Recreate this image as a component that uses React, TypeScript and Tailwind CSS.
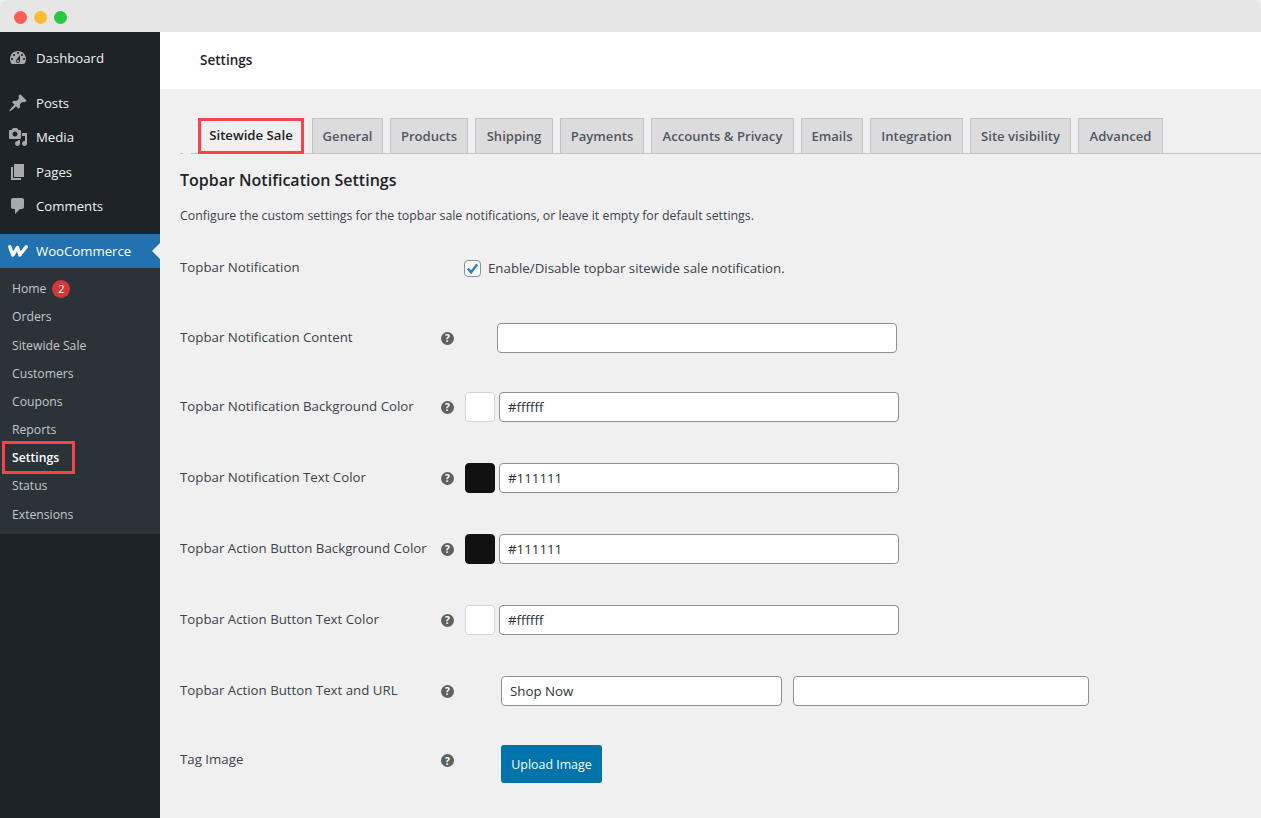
import type { ReactNode } from 'react';

const font = { sans: "font-['Open_Sans',sans-serif]" };

// wp admin menu glyphs
const icons = {
  dashboard:
    'M3.76 16h12.48c1.1-1.37 1.76-3.11 1.76-5 0-4.42-3.58-8-8-8s-8 3.58-8 8c0 1.89.66 3.63 1.76 5zM10 4c.55 0 1 .45 1 1s-.45 1-1 1-1-.45-1-1 .45-1 1-1zM6 6c.55 0 1 .45 1 1s-.45 1-1 1-1-.45-1-1 .45-1 1-1zm8 0c.55 0 1 .45 1 1s-.45 1-1 1-1-.45-1-1 .45-1 1-1zm-5.37 5.55L12 7v6c0 1.1-.9 2-2 2s-2-.9-2-2c0-.57.24-1.08.63-1.45zM4 10c.55 0 1 .45 1 1s-.45 1-1 1-1-.45-1-1 .45-1 1-1zm12 0c.55 0 1 .45 1 1s-.45 1-1 1-1-.45-1-1 .45-1 1-1zm-5 3c0-.55-.45-1-1-1s-1 .45-1 1 .45 1 1 1 1-.45 1-1z',
  posts:
    'M10.44 3.02l1.82-1.82 6.36 6.35-1.83 1.82c-1.05-.68-2.48-.57-3.41.36l-.75.75c-.92.93-1.04 2.35-.35 3.41l-1.83 1.82-2.41-2.41-2.8 2.79c-.42.42-3.38 2.71-3.8 2.29s1.86-3.39 2.28-3.81l2.79-2.79L4.1 9.36l1.83-1.82c1.05.69 2.48.57 3.4-.36l.75-.75c.93-.92 1.05-2.35.36-3.41z',
  media:
    'M13 11V4c0-.55-.45-1-1-1h-1.67L9 1H5L3.67 3H2c-.55 0-1 .45-1 1v7c0 .55.45 1 1 1h10c.55 0 1-.45 1-1zM7 4.5c1.38 0 2.5 1.12 2.5 2.5S8.38 9.5 7 9.5 4.5 8.38 4.5 7 5.62 4.5 7 4.5zM14 6h5v10.5c0 1.38-1.12 2.5-2.5 2.5S14 17.88 14 16.5s1.12-2.5 2.5-2.5c.17 0 .34.02.5.05V9h-3V6zm-4 8.05V13h2v3.5c0 1.38-1.12 2.5-2.5 2.5S7 17.88 7 16.5 8.12 14 9.5 14c.17 0 .34.02.5.05z',
  pages: 'M6 15V2h10v13H6zm-1 1h8v2H3V5h2v11z',
  comments: 'M5 2h9c1.1 0 2 .9 2 2v7c0 1.1-.9 2-2 2h-2l-5 5v-5H5c-1.1 0-2-.9-2-2V4c0-1.1.9-2 2-2z',
};

const MenuIcon = ({ d }: { d: string }) => (
  <svg viewBox="0 0 20 20" className="w-5 h-5 ml-2 shrink-0 fill-[#a7aaad]">
    <path d={d} />
  </svg>
);

const MenuItem = ({ icon, label }: { icon: string; label: string }) => (
  <div className="flex items-center h-[34.4px] text-[#f0f0f1]">
    <MenuIcon d={icon} />
    <span className="ml-[8px] pt-[2px]">{label}</span>
  </div>
);

const submenu = ['Orders', 'Sitewide Sale', 'Customers', 'Coupons', 'Reports'];

const Sidebar = () => (
  <aside className="w-40 shrink-0 bg-[#1d2327] text-[13.2px] pt-[9px]">
    <MenuItem icon={icons.dashboard} label="Dashboard" />
    <div className="h-[10.4px]" />
    <MenuItem icon={icons.posts} label="Posts" />
    <MenuItem icon={icons.media} label="Media" />
    <MenuItem icon={icons.pages} label="Pages" />
    <MenuItem icon={icons.comments} label="Comments" />
    <div className="h-[10.4px]" />
    <div className="relative flex items-center h-[34px] bg-[#2271b1] text-white">
      <svg viewBox="0 0 20 12" className="w-[20px] h-[12px] ml-[8px] shrink-0">
        <path d="M1.8 1.8 L4.8 10 L9.5 2.5 L11.8 10 L18.2 1.8" fill="none" stroke="#fff" strokeWidth="3.4" strokeLinejoin="round" strokeLinecap="round" />
      </svg>
      <span className="ml-[8px] pt-[2px]">WooCommerce</span>
      <div className="absolute right-0 top-[9px] w-0 h-0 border-y-[8px] border-y-transparent border-r-[8px] border-r-[#f0f0f1]" />
    </div>
    <div className="bg-[#2c3338] pt-[7.5px] pb-[4.7px] text-[12.2px] text-[#c3c8cc]">
      <div className="flex items-center h-[28.2px] pl-3">
        Home
        <span className="ml-[6px] w-[18px] h-[18px] rounded-full bg-[#d63638] text-white text-[11px] flex items-center justify-center">2</span>
      </div>
      {submenu.map((item) => (
        <div key={item} className="flex items-center h-[28.2px] pl-3">{item}</div>
      ))}
      <div className="relative flex items-center h-[28.2px] pl-3 font-semibold text-white">
        Settings
        <div className="absolute left-[2px] top-[-3px] w-[73px] h-[33px] border-[3px] border-[#f9434c]" />
      </div>
      <div className="flex items-center h-[28.2px] pl-3">Status</div>
      <div className="flex items-center h-[28.2px] pl-3">Extensions</div>
    </div>
  </aside>
);

const tabs = [
  { label: 'General', w: 'w-[71px]' },
  { label: 'Products', w: 'w-[78px]' },
  { label: 'Shipping', w: 'w-[78px]' },
  { label: 'Payments', w: 'w-[84px]' },
  { label: 'Accounts & Privacy', w: 'w-[143px]' },
  { label: 'Emails', w: 'w-[62px]' },
  { label: 'Integration', w: 'w-[93px]' },
  { label: 'Site visibility', w: 'w-[101px]' },
  { label: 'Advanced', w: 'w-[85px]' },
];

const Tabs = () => (
  <div className="flex items-end gap-[7px] h-[35px] mt-[30px] border-b border-[#c3c4c7] pl-[18px] relative">
    <div className="absolute left-[3px] bottom-[-1px] w-[8px] h-px bg-[#f0f0f0]" />
    <div className="flex items-center justify-center w-[106px] h-[36px] -mb-px border-[3px] border-[#f9434c] mr-px text-[13.2px] font-semibold text-[#1d2327] bg-[#f0f0f0]">
      Sitewide Sale
    </div>
    {tabs.map((t) => (
      <div key={t.label} className={`flex items-center justify-center h-[35px] pt-[2px] ${t.w} bg-[#dcdcde] border border-b-0 border-[#c3c4c7] text-[13.1px] font-semibold text-[#50575e]`}>
        {t.label}
      </div>
    ))}
  </div>
);

const Help = () => (
  <span className="w-[13px] h-[13px] shrink-0 rounded-full bg-[#5f6060] text-white text-[10px] font-bold flex items-center justify-center leading-none">?</span>
);

const Field = ({ value, className }: { value?: string; className: string }) => (
  <div className={`flex items-center h-[30px] pt-[2px] bg-white border border-[#8c8f94] rounded-[4px] px-2 text-[13.3px] text-[#2c3338] ${className}`}>
    {value}
  </div>
);

const Row = ({ label, help = true, className, children }: { label: string; help?: boolean; className?: string; children: ReactNode }) => (
  <div className={`flex items-center h-10 ${className ?? ''}`}>
    <span className="w-[261px] shrink-0">{label}</span>
    {help ? <Help /> : <span className="w-3 shrink-0" />}
    {children}
  </div>
);

const ColorRow = ({ label, color, value, className }: { label: string; color: string; value: string; className: string }) => (
  <Row label={label} className={className}>
    <div className={`ml-[11px] w-[30px] h-[30px] rounded-[4px] border ${color}`} />
    <Field value={value} className="ml-[4px] w-[400px]" />
  </Row>
);

export default function App() {
  return (
    <div className={`${font.sans} h-[818px] w-[1261px] overflow-hidden flex flex-col bg-[#f0f0f0]`}>
      <div className="h-8 shrink-0 bg-[#e6e6e6] rounded-t-lg flex items-center gap-[7px] pl-[13.5px] pt-[2px]">
        <span className="w-[13px] h-[13px] rounded-full bg-[#ff5f57]" />
        <span className="w-[13px] h-[13px] rounded-full bg-[#febc2e]" />
        <span className="w-[13px] h-[13px] rounded-full bg-[#28c840]" />
      </div>
      <div className="flex flex-1 min-h-0">
        <Sidebar />
        <main className="flex-1 min-w-0 text-[13.27px] text-[#3c434a]">
          <header className="h-[57px] bg-white flex items-center pl-10 text-[13.5px] font-semibold text-[#1d2327]">Settings</header>
          <div className="pl-5">
            <Tabs />
            <h2 className="text-[16px] font-semibold text-[#1d2327] mt-[14px] leading-[24px]">Topbar Notification Settings</h2>
            <p className="mt-[14px] leading-[20px] text-[12.35px]">Configure the custom settings for the topbar sale notifications, or leave it empty for default settings.</p>
            <Row label="Topbar Notification" help={false} className="mt-[22px]">
              <div className="flex items-center pt-[2px]">
                <div className="ml-[11px] w-[17px] h-[17px] rounded-[4px] border border-[#8c8f94] bg-white flex items-center justify-center">
                  <svg viewBox="0 0 16 16" className="w-[15px] h-[15px]">
                    <path d="M3 8.2 L6.6 12 L13 3.5" fill="none" stroke="#3582c4" strokeWidth="2.8" />
                  </svg>
                </div>
                <span className="ml-[7px]">Enable/Disable topbar sitewide sale notification.</span>
              </div>
            </Row>
            <Row label="Topbar Notification Content" className="mt-[30px]">
              <Field className="ml-[43px] w-[400px]" />
            </Row>
            <ColorRow label="Topbar Notification Background Color" color="bg-white border-[#d5d5d5]" value="#ffffff" className="mt-[29px]" />
            <ColorRow label="Topbar Notification Text Color" color="bg-[#111111] border-[#111111]" value="#111111" className="mt-[31px]" />
            <ColorRow label="Topbar Action Button Background Color" color="bg-[#111111] border-[#111111]" value="#111111" className="mt-[31px]" />
            <ColorRow label="Topbar Action Button Text Color" color="bg-white border-[#d5d5d5]" value="#ffffff" className="mt-[31px]" />
            <Row label="Topbar Action Button Text and URL" className="mt-[31px]">
              <Field value="Shop Now" className="ml-[47px] w-[281px]" />
              <Field className="ml-[11px] w-[296px]" />
            </Row>
            <div className="flex items-start mt-[34px] h-10">
              <span className="w-[261px] shrink-0 mt-[5px]">Tag Image</span>
              <span className="mt-[9px]"><Help /></span>
              <button className="ml-[47px] w-[101px] h-[38px] pt-[2px] rounded-[3px] bg-[#0073aa] text-white text-[12.4px]">Upload Image</button>
            </div>
          </div>
        </main>
      </div>
    </div>
  );
}
